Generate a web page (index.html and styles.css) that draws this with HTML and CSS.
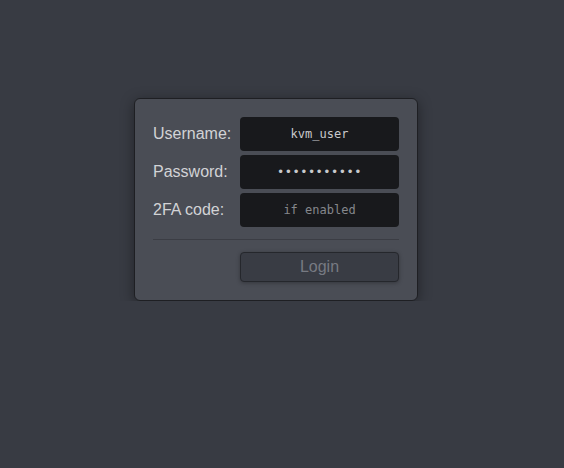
FILE: index.html
```html
<!DOCTYPE html>
<html>
<head>
  <title>Login</title>
  <link rel="stylesheet" href="styles.css">
</head>
<body>
  <div class="page">
    <div class="login-box">
      <div class="row">
        <label for="user">Username:</label>
        <input type="text" id="user" value="kvm_user">
      </div>
      <div class="row">
        <label for="passwd">Password:</label>
        <input type="password" id="passwd" value="kvmpassword">
      </div>
      <div class="row">
        <label for="code">2FA code:</label>
        <input type="text" id="code" placeholder="if enabled">
      </div>
      <hr>
      <div class="row">
        <span></span>
        <button disabled>Login</button>
      </div>
    </div>
  </div>
</body>
</html>
```

FILE: styles.css
```css
body {
  font-family: "Liberation Sans", Arial, sans-serif;
  background-color: #383b43;
  margin: 0;
  padding: 0;
}

.page {
  padding-top: 98px;
  padding-left: 134px;
}

.login-box {
  width: 246px;
  padding: 18px 18px 18px 18px;
  background-color: #4a4d55;
  border: 1px solid #1e1f23;
  border-radius: 6px;
  box-shadow: 0 3px 14px rgba(0, 0, 0, 0.4);
  display: flex;
  flex-direction: column;
  gap: 4px;
}

.row {
  display: grid;
  grid-template-columns: 87px 159px;
  align-items: center;
}

label {
  color: #d2d3d6;
  font-size: 16px;
  white-space: nowrap;
}

input[type="text"],
input[type="password"] {
  height: 34px;
  box-sizing: border-box;
  width: 159px;
  background-color: #18191c;
  border: none;
  border-radius: 4px;
  color: #c8c9cc;
  font-family: "DejaVu Sans Mono", monospace;
  font-size: 12px;
  text-align: center;
  outline: none;
  padding: 0 6px;
}

input[type="password"] {
  letter-spacing: 0.5px;
}

input::placeholder {
  color: #85878c;
}

hr {
  width: 246px;
  margin: 8px 0 8px 0;
  border: none;
  border-top: 1px solid #3b3d44;
  height: 0;
}

button {
  height: 30px;
  width: 159px;
  background-color: #393c44;
  border: 1px solid #25272c;
  border-radius: 4px;
  color: #777a82;
  font-family: "Liberation Sans", Arial, sans-serif;
  font-size: 16px;
  box-shadow: 0 1px 4px rgba(0, 0, 0, 0.3);
}
```
